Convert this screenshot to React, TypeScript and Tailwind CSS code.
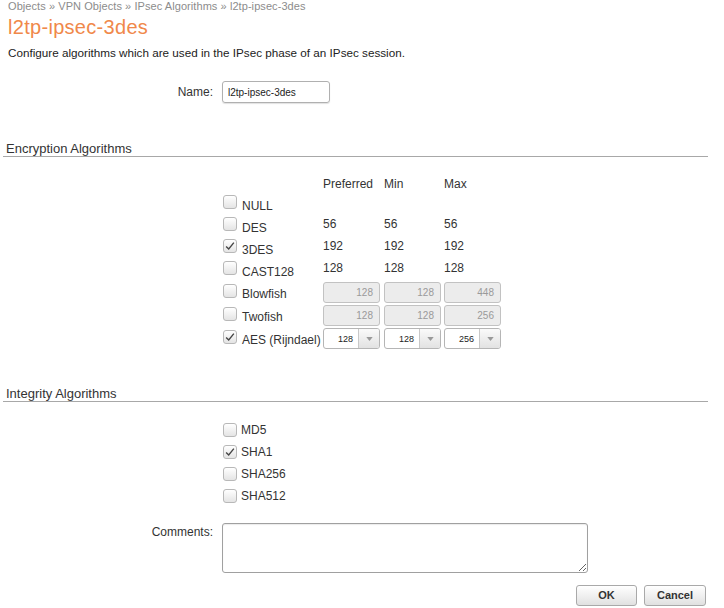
import React from "react";

type Kind = "none" | "text" | "disabled" | "select";

interface EncRow {
  name: string;
  checked: boolean;
  kind: Kind;
  values: string[];
}

const encRows: EncRow[] = [
  { name: "NULL", checked: false, kind: "none", values: [] },
  { name: "DES", checked: false, kind: "text", values: ["56", "56", "56"] },
  { name: "3DES", checked: true, kind: "text", values: ["192", "192", "192"] },
  { name: "CAST128", checked: false, kind: "text", values: ["128", "128", "128"] },
  { name: "Blowfish", checked: false, kind: "disabled", values: ["128", "128", "448"] },
  { name: "Twofish", checked: false, kind: "disabled", values: ["128", "128", "256"] },
  { name: "AES (Rijndael)", checked: true, kind: "select", values: ["128", "128", "256"] },
];

const integrity = [
  { name: "MD5", checked: false },
  { name: "SHA1", checked: true },
  { name: "SHA256", checked: false },
  { name: "SHA512", checked: false },
];

const cellWidths = ["w-[61px]", "w-[60px]", "w-[60px]"];

const Checkbox = ({ checked }: { checked: boolean }) => (
  <span className="w-[14px] h-[14px] shrink-0 rounded-[3px] border border-[#b8b8b8] bg-linear-to-b from-white to-[#e4e4e4] flex items-center justify-center">
    {checked && (
      <svg viewBox="0 0 14 14" className="w-[12px] h-[12px]" fill="none" stroke="#444" strokeWidth="1.6">
        <polyline points="2.5,7.5 5.5,10.5 11.5,3" />
      </svg>
    )}
  </span>
);

const SelectBox = ({ value }: { value: string }) => (
  <div className="w-[57px] h-[21px] flex rounded-[3px] border border-[#b5b5b5] bg-white overflow-hidden">
    <div className="flex-1 flex items-center justify-end pr-[5px] text-[9px] text-[#222]">{value}</div>
    <div className="w-[21px] border-l border-[#c8c8c8] bg-linear-to-b from-[#fafafa] to-[#e2e2e2] flex items-center justify-center">
      <svg viewBox="0 0 8 5" className="w-[7px] h-[4px]">
        <polygon points="0,0 8,0 4,5" fill="#999" />
      </svg>
    </div>
  </div>
);

const DisabledBox = ({ value }: { value: string }) => (
  <div className="w-[57px] h-[21px] rounded-[3px] border border-[#c2c2c2] bg-[#ececec] flex items-center justify-end pr-[6px] text-[10px] text-[#9a9a9a]">
    {value}
  </div>
);

const SectionHeader = ({ title }: { title: string }) => (
  <div className="ml-[3px] w-[705px] border-b border-[#a8a8a8] pl-[3px] text-[13px] leading-[15px] text-[#333]">
    {title}
  </div>
);

export default function App() {
  return (
    <div
      className="w-[724px] h-[608px] bg-white overflow-hidden flex flex-col text-[#333]"
      style={{ fontFamily: '"Liberation Sans", Arial, sans-serif' }}
    >
      <div className="pl-[8px] h-[12px] text-[11px] leading-[12px] tracking-[0.07px] text-[#8c8c8c]">
        Objects » VPN Objects » IPsec Algorithms » l2tp-ipsec-3des
      </div>
      <div className="pl-[8px] mt-[3px] text-[20px] leading-[24px] tracking-[0.3px] text-[#f0884a]">
        l2tp-ipsec-3des
      </div>
      <div className="pl-[8px] mt-[7px] text-[11.7px] leading-[14px] text-[#222]">
        Configure algorithms which are used in the IPsec phase of an IPsec session.
      </div>

      <div className="mt-[21px] flex items-center">
        <div className="w-[213px] text-right text-[12px]">Name:</div>
        <input
          readOnly
          value="l2tp-ipsec-3des"
          className="ml-[9px] w-[108px] h-[22px] rounded-[3px] border border-[#b0b0b0] shadow-[0_1px_1px_rgba(0,0,0,0.12)] px-[5px] text-[10px] text-[#222] outline-none"
        />
      </div>

      <div className="mt-[38px]">
        <SectionHeader title="Encryption Algorithms" />
      </div>

      <div className="pl-[223px] mt-[20px] flex flex-col text-[12px] leading-[14px]">
        <div className="flex h-[17px]">
          <div className="w-[100px]" />
          <div className={cellWidths[0]}>Preferred</div>
          <div className={cellWidths[1]}>Min</div>
          <div className={cellWidths[2]}>Max</div>
        </div>
        {encRows.map((r) => {
          const boxed = r.kind === "disabled" || r.kind === "select";
          return (
            <div key={r.name} className={`flex items-start ${boxed ? "h-[23px]" : "h-[22px]"}`}>
              <div className="w-[100px] flex items-start gap-[5px]">
                <div className={boxed ? "mt-[2px]" : "mt-[1px]"}>
                  <Checkbox checked={r.checked} />
                </div>
                <span className="whitespace-nowrap text-[#333] mt-[5px]">{r.name}</span>
              </div>
              {r.values.map((v, i) => (
                <div key={i} className={cellWidths[i]}>
                  {r.kind === "text" && <div className="mt-[1px]">{v}</div>}
                  {r.kind === "disabled" && <DisabledBox value={v} />}
                  {r.kind === "select" && <SelectBox value={v} />}
                </div>
              ))}
            </div>
          );
        })}
      </div>

      <div className="mt-[35px]">
        <SectionHeader title="Integrity Algorithms" />
      </div>

      <div className="pl-[223px] mt-[20px] flex flex-col text-[12px]">
        {integrity.map((r) => (
          <div key={r.name} className="h-[22px] flex items-start gap-[4px]">
            <div className="mt-[1px]">
              <Checkbox checked={r.checked} />
            </div>
            <span className="mt-[1px] leading-[14px]">{r.name}</span>
          </div>
        ))}
      </div>

      <div className="mt-[13px] flex items-start">
        <div className="w-[213px] text-right text-[12px] leading-[14px] mt-[2px]">Comments:</div>
        <textarea
          readOnly
          className="ml-[9px] w-[366px] h-[50px] rounded-[3px] border border-[#a0a0a0] shadow-[inset_0_1px_1px_rgba(0,0,0,0.08)] outline-none text-[12px] p-[3px]"
        />
      </div>

      <div className="mt-[12px] flex justify-end gap-[7px] pr-[18px]">
        <button className="w-[61px] h-[21px] rounded-[3px] border border-[#a9a9a9] bg-linear-to-b from-white to-[#e1e1e1] text-[11px] font-bold text-[#333]">
          OK
        </button>
        <button className="w-[62px] h-[21px] rounded-[3px] border border-[#a9a9a9] bg-linear-to-b from-white to-[#e1e1e1] text-[11px] font-bold text-[#333]">
          Cancel
        </button>
      </div>
    </div>
  );
}
